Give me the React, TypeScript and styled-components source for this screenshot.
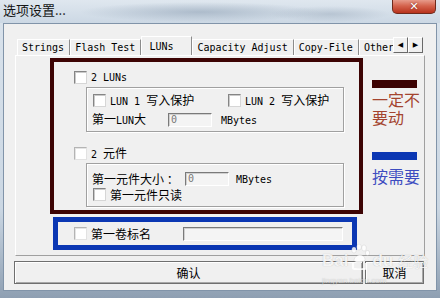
import React from 'react'
import styled, {createGlobalStyle} from 'styled-components'

const GlobalStyle = createGlobalStyle`
  html, body { margin: 0; padding: 0; }
  body { width: 440px; height: 298px; overflow: hidden; background: #c8d6e5; }
`

const Window = styled.div`
  position: relative;
  width: 440px;
  height: 298px;
  box-sizing: border-box;
  display: flex;
  flex-direction: column;
  overflow: hidden;
  background: linear-gradient(180deg, #dae3ec 0%, #cbd7e3 70%, #8e9fb2 100%);
  font-family: "Noto Sans CJK SC", sans-serif;
  font-size: 12px;
  color: #000;
`

const TitleBar = styled.div`
  height: 23px;
  flex: none;
  display: flex;
  justify-content: space-between;
  align-items: flex-start;
  padding-left: 3px;
  background:
    radial-gradient(ellipse 120px 10px at 200px 12px, rgba(140, 158, 178, 0.55), transparent),
    radial-gradient(ellipse 60px 8px at 330px 14px, rgba(150, 166, 184, 0.45), transparent),
    linear-gradient(180deg, #dfe7ef, #ccd8e4);
`

const Title = styled.div`
  font-size: 13px;
  line-height: 20px;
  color: #141414;
`

const CloseButton = styled.div`
  width: 44px;
  height: 15px;
  margin-right: 4px;
  margin-top: -1px;
  box-sizing: border-box;
  border: 1px solid #6e2a1c;
  border-top: none;
  border-radius: 0 0 5px 5px;
  background: linear-gradient(180deg, #eaa595 0%, #d4624c 50%, #b8321c 100%);
  display: flex;
  align-items: center;
  justify-content: center;
  color: #fff;
  font-family: "DejaVu Sans", sans-serif;
  font-weight: bold;
  font-size: 11px;
  text-shadow: 0 0 2px #6a1a10;
`

const Client = styled.div`
  flex: 1;
  margin: 0 3px 7px 3px;
  border: 1px solid #8194a9;
  background: #f0f0f0;
  padding: 12px 0 0 11px;
  display: flex;
  flex-direction: column;
`

const TabStrip = styled.div`
  height: 19px;
  display: flex;
  align-items: flex-end;
  padding-left: 2px;
  position: relative;
  z-index: 1;
`

const TabList = styled.div`
  width: 376px;
  height: 100%;
  display: flex;
  align-items: flex-end;
  overflow: hidden;
`

const Mono = styled.span`
  font-family: "DejaVu Sans Mono", "Liberation Mono", monospace;
  font-size: 10px;
`

const Tab = styled.div<{ $active?: boolean }>`
  flex: none;
  box-sizing: border-box;
  height: ${p => (p.$active ? 20 : 16)}px;
  margin-bottom: ${p => (p.$active ? -1 : 0)}px;
  width: ${p => (p.$active ? '51px' : 'auto')};
  padding: ${p => (p.$active ? '2px 0 0 7px' : '0 5px 0 4px')};
  line-height: 15px;
  background: #f0f0f0;
  border-top: 1px solid #fff;
  border-left: 1px solid #fff;
  border-right: 1px solid #8c8c8c;
  font-family: "DejaVu Sans Mono", "Liberation Mono", monospace;
  font-size: 10px;
  white-space: nowrap;
`

const Arrows = styled.div`
  align-self: flex-start;
  margin-top: 1px;
  display: flex;
`

const ArrowButton = styled.div`
  width: 15px;
  height: 16px;
  box-sizing: border-box;
  background: #f0f0f0;
  border-top: 1px solid #fff;
  border-left: 1px solid #fff;
  border-right: 1px solid #696969;
  border-bottom: 1px solid #696969;
  display: flex;
  align-items: center;
  justify-content: center;
  font-size: 7px;
  font-family: "DejaVu Sans", sans-serif;
`

const Panel = styled.div`
  width: 410px;
  height: 201px;
  box-sizing: border-box;
  border-top: 1px solid #fff;
  border-left: 1px solid #fff;
  border-right: 1px solid #a0a0a0;
  border-bottom: 1px solid #a0a0a0;
  padding: 2px 0 0 34px;
  display: flex;
`

const LeftColumn = styled.div`
  width: 313px;
  display: flex;
  flex-direction: column;
`

const DarkBox = styled.div`
  width: 313px;
  height: 156px;
  box-sizing: border-box;
  border: 4px solid #3d0404;
  padding-top: 9px;
  display: flex;
  flex-direction: column;
`

const CheckRow = styled.div<{ $indent?: number; $top?: number; $width?: number }>`
  display: flex;
  align-items: center;
  gap: 4px;
  height: 13px;
  margin-left: ${p => p.$indent ?? 0}px;
  margin-top: ${p => p.$top ?? 0}px;
  width: ${p => (p.$width ? `${p.$width}px` : 'auto')};
  flex: none;
  white-space: nowrap;
  line-height: 13px;
`

const Box = styled.span<{ $disabled?: boolean }>`
  width: 13px;
  height: 13px;
  box-sizing: border-box;
  flex: none;
  border: 1px solid;
  border-color: ${p => (p.$disabled ? '#b4b4b4 #e2e2e2 #e2e2e2 #b4b4b4' : '#858585 #d6d6d6 #d6d6d6 #858585')};
  background: #fff;
  box-shadow: inset 1px 1px 0 ${p => (p.$disabled ? '#e4e4e4' : '#cacaca')};
`

const Group = styled.div<{ $height: number; $top: number }>`
  margin-left: 32px;
  margin-top: ${p => p.$top}px;
  width: 258px;
  height: ${p => p.$height}px;
  box-sizing: border-box;
  border: 1px solid #a0a0a0;
  box-shadow: inset 1px 1px 0 #fff, 1px 1px 0 #fff;
  padding: 6px 0 0 6px;
  display: flex;
  flex-direction: column;
`

const GroupRow = styled.div<{ $top?: number }>`
  display: flex;
  align-items: center;
  margin-top: ${p => p.$top ?? 0}px;
`

const Label = styled.span<{ $width: number }>`
  width: ${p => p.$width}px;
  margin-left: -1px;
  flex: none;
  white-space: nowrap;
  line-height: 14px;
`

const Field = styled.div<{ $width: number }>`
  width: ${p => p.$width}px;
  height: 14px;
  box-sizing: border-box;
  flex: none;
  border-top: 1px solid #7a7a7a;
  border-left: 1px solid #7a7a7a;
  border-right: 1px solid #fff;
  border-bottom: 1px solid #fff;
  box-shadow: inset 1px 1px 0 #d0d0d0;
  background: #f4f4f4;
  padding-left: 2px;
  font-family: "DejaVu Sans Mono", monospace;
  font-size: 10px;
  line-height: 12px;
  color: #777;
`

const Unit = styled(Mono)<{ $gap: number }>`
  margin-left: ${p => p.$gap}px;
`

const BlueBox = styled.div`
  margin: 3px 0 0 3px;
  width: 304px;
  height: 33px;
  box-sizing: border-box;
  border: 5px solid #0b37b3;
  padding-left: 16px;
  display: flex;
  align-items: center;
`

const Legend = styled.div`
  margin-left: 9px;
  padding-top: 22px;
  width: 50px;
  display: flex;
  flex-direction: column;
`

const Bar = styled.div<{ $color: string; $top?: number }>`
  width: 45px;
  height: 8px;
  margin-top: ${p => p.$top ?? 0}px;
  background: ${p => p.$color};
`

const Note = styled.div<{ $color: string; $top: number }>`
  width: 48px;
  margin-top: ${p => p.$top}px;
  font-size: 16px;
  line-height: 18px;
  color: ${p => p.$color};
`

const ButtonRow = styled.div`
  margin: 5px 0 0 -1px;
  display: flex;
  gap: 2px;
`

const Button = styled.div<{ $width: number }>`
  width: ${p => p.$width}px;
  height: 23px;
  box-sizing: border-box;
  border: 1px solid #6f6f6f;
  box-shadow: inset 1px 1px 0 #fff, inset -1px -1px 0 #a8a8a8;
  background: #f0f0f0;
  display: flex;
  align-items: center;
  justify-content: center;
  font-size: 12px;
`

const Watermark = styled.div`
  position: absolute;
  left: 322px;
  top: 244px;
  display: flex;
  flex-direction: column;
  color: rgba(255, 255, 255, 0.85);
  text-shadow: 0 0 1px rgba(0, 0, 0, 0.25);
  pointer-events: none;
`

const MarkLine = styled.div`
  display: flex;
  align-items: flex-end;
  gap: 1px;
  font-family: "Liberation Sans", sans-serif;
  font-weight: bold;
  font-size: 17px;
  line-height: 18px;
`

const MarkCn = styled.span`
  font-family: "Noto Sans CJK SC", sans-serif;
  font-size: 15px;
  font-weight: normal;
  margin-left: 4px;
`

const MarkUrl = styled.div`
  font-family: "Liberation Sans", sans-serif;
  font-size: 8px;
  line-height: 10px;
  margin-top: 6px;
  color: rgba(255, 255, 255, 0.6);
`

const Paw = () => (
  <svg width="22" height="26" viewBox="0 0 22 26">
    <g fill="rgba(255,255,255,0.85)" stroke="rgba(0,0,0,0.12)" strokeWidth="0.6">
      <ellipse cx="5" cy="6" rx="2.3" ry="3" />
      <ellipse cx="10" cy="3" rx="2.3" ry="3" />
      <ellipse cx="15" cy="4" rx="2.3" ry="3" />
      <ellipse cx="18.5" cy="9" rx="2.1" ry="2.6" />
      <path d="M5 16 C6 10, 15 9, 16 15 C16.5 19, 5 19.5, 5 16 Z" />
      <path d="M4 19 L4 24 C4 26, 17 26, 17 24 L17 19" fill="none" stroke="rgba(255,255,255,0.85)" strokeWidth="2.2" />
    </g>
  </svg>
)

const tabs = ['Strings', 'Flash Test', 'LUNs', 'Capacity Adjust', 'Copy-File', 'Other']

export default function App() {
  return (
    <>
      <GlobalStyle />
      <Window>
        <TitleBar>
          <Title>选项设置...</Title>
          <CloseButton>✕</CloseButton>
        </TitleBar>
        <Client>
          <TabStrip>
            <TabList>
              {tabs.map(t => (
                <Tab key={t} $active={t === 'LUNs'}>{t}</Tab>
              ))}
            </TabList>
            <Arrows>
              <ArrowButton>◀</ArrowButton>
              <ArrowButton>▶</ArrowButton>
            </Arrows>
          </TabStrip>
          <Panel>
            <LeftColumn>
              <DarkBox>
                <CheckRow $indent={20}>
                  <Box />
                  <Mono>2 LUNs</Mono>
                </CheckRow>
                <Group $height={45} $top={3}>
                  <GroupRow>
                    <CheckRow $width={135}>
                      <Box />
                      <span><Mono>LUN 1 </Mono>写入保护</span>
                    </CheckRow>
                    <CheckRow>
                      <Box />
                      <span><Mono>LUN 2 </Mono>写入保护</span>
                    </CheckRow>
                  </GroupRow>
                  <GroupRow $top={5}>
                    <Label $width={76}>第一<Mono>LUN</Mono>大</Label>
                    <Field $width={44}>0</Field>
                    <Unit $gap={9}>MBytes</Unit>
                  </GroupRow>
                </Group>
                <CheckRow $indent={20} $top={15}>
                  <Box $disabled />
                  <span><Mono>2 </Mono>元件</span>
                </CheckRow>
                <Group $height={44} $top={3}>
                  <GroupRow $top={2}>
                    <Label $width={93}>第一元件大小 ：</Label>
                    <Field $width={44}>0</Field>
                    <Unit $gap={7}>MBytes</Unit>
                  </GroupRow>
                  <GroupRow $top={2}>
                    <CheckRow>
                      <Box />
                      <span>第一元件只读</span>
                    </CheckRow>
                  </GroupRow>
                </Group>
              </DarkBox>
              <BlueBox>
                <CheckRow $width={109}>
                  <Box $disabled />
                  <span>第一卷标名</span>
                </CheckRow>
                <Field $width={160} />
              </BlueBox>
            </LeftColumn>
            <Legend>
              <Bar $color="#3c0202" />
              <Note $color="#a4442f" $top={2}>一定不要动</Note>
              <Bar $color="#0b37b3" $top={26} />
              <Note $color="#3d4cc0" $top={7}>按需要</Note>
            </Legend>
          </Panel>
          <ButtonRow>
            <Button $width={349}>确认</Button>
            <Button $width={59}>取消</Button>
          </ButtonRow>
        </Client>
        <Watermark>
          <MarkLine>
            <span>Bai</span>
            <Paw />
            <span>du</span>
            <MarkCn>经验</MarkCn>
          </MarkLine>
          <MarkUrl>jingyan.baidu.com</MarkUrl>
        </Watermark>
      </Window>
    </>
  )
}
